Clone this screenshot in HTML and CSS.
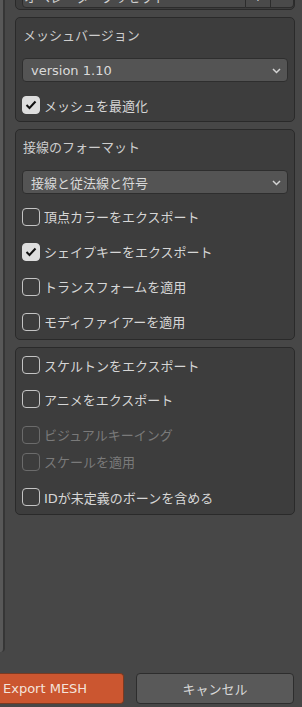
FILE: index.html
```html
<!DOCTYPE html>
<html lang="ja">
<head>
<meta charset="utf-8">
<title>Export MESH</title>
<link rel="stylesheet" href="styles.css">
</head>
<body>
<div class="window">
  <div class="top">
    <div class="edge"></div>
    <div class="panels">
      <section class="panel panel-preset">
        <div class="preset-row">
          <div class="preset-field"><span>オペレータープリセット</span><svg class="chev" width="8" height="5" viewBox="0 0 8 5"><polyline points="1,1 4,4 7,1" fill="none" stroke="#cfcfcf" stroke-width="1.4"/></svg></div>
          <div class="preset-btn">+</div>
          <div class="preset-btn last">−</div>
        </div>
      </section>

      <section class="panel">
        <div class="title">メッシュバージョン</div>
        <div class="select"><span>version 1.10</span><svg class="chev" width="9" height="6" viewBox="0 0 9 6"><polyline points="1,1 4.5,4.5 8,1" fill="none" stroke="#d4d4d4" stroke-width="1.5"/></svg></div>
        <label class="check-row first-check"><span class="box checked"><svg width="12" height="10" viewBox="0 0 12 10"><polyline points="1.5,5 4.5,8 10.5,1.5" fill="none" stroke="#111" stroke-width="2"/></svg></span><span class="lbl">メッシュを最適化</span></label>
      </section>

      <section class="panel">
        <div class="title">接線のフォーマット</div>
        <div class="select"><span>接線と従法線と符号</span><svg class="chev" width="9" height="6" viewBox="0 0 9 6"><polyline points="1,1 4.5,4.5 8,1" fill="none" stroke="#d4d4d4" stroke-width="1.5"/></svg></div>
        <div class="checks">
          <label class="check-row"><span class="box"></span><span class="lbl">頂点カラーをエクスポート</span></label>
          <label class="check-row"><span class="box checked"><svg width="12" height="10" viewBox="0 0 12 10"><polyline points="1.5,5 4.5,8 10.5,1.5" fill="none" stroke="#111" stroke-width="2"/></svg></span><span class="lbl">シェイプキーをエクスポート</span></label>
          <label class="check-row"><span class="box"></span><span class="lbl">トランスフォームを適用</span></label>
          <label class="check-row"><span class="box"></span><span class="lbl">モディファイアーを適用</span></label>
        </div>
      </section>

      <section class="panel panel-anim">
        <label class="check-row"><span class="box"></span><span class="lbl">スケルトンをエクスポート</span></label>
        <label class="check-row"><span class="box"></span><span class="lbl">アニメをエクスポート</span></label>
        <div class="subgroup">
          <label class="check-row small disabled"><span class="box"></span><span class="lbl">ビジュアルキーイング</span></label>
          <label class="check-row small disabled"><span class="box"></span><span class="lbl">スケールを適用</span></label>
        </div>
        <label class="check-row"><span class="box"></span><span class="lbl">IDが未定義のボーンを含める</span></label>
      </section>
    </div>
  </div>
  <div class="footer">
    <button class="btn btn-export">Export MESH</button>
    <button class="btn btn-cancel">キャンセル</button>
  </div>
</div>
</body>
</html>
```

FILE: styles.css
```css
* { box-sizing: border-box; }
html, body {
  margin: 0;
  padding: 0;
  background: #474747;
  overflow: hidden;
}
body {
  font-family: "DejaVu Sans", "Noto Sans CJK JP", sans-serif;
  font-size: 13px;
  color: #d6d6d6;
}
.window {
  width: 302px;
  height: 707px;
  display: flex;
  flex-direction: column;
}
.top {
  display: flex;
  height: 652px;
}
.edge {
  width: 5px;
  flex: none;
  background: #585858;
  border-right: 2px solid #363636;
  border-bottom-right-radius: 4px;
}
.panels {
  margin-left: 10px;
  width: 280px;
  display: flex;
  flex-direction: column;
  gap: 7px;
}
.panel {
  background: #3d3d3d;
  border: 1px solid #2a2a2a;
  border-radius: 5px;
  padding: 6px 6px 4px 6px;
}
.panel-preset {
  margin-top: -17px;
  padding: 0 0 1px 6px;
  border-top-left-radius: 0;
  border-top-right-radius: 0;
}
.preset-row {
  display: flex;
  height: 24px;
}
.preset-field {
  flex: 1;
  display: flex;
  align-items: center;
  justify-content: space-between;
  padding: 0 5px 0 1px;
  background: #4a4a4a;
  border: 1px solid #2c2c2c;
  border-radius: 0 0 0 4px;
  color: #cfcfcf;
}
.preset-btn {
  width: 25px;
  display: flex;
  align-items: center;
  justify-content: center;
  background: #4a4a4a;
  border: 1px solid #2c2c2c;
  border-left: none;
  color: #cfcfcf;
}
.preset-btn.last {
  width: 23px;
  border-radius: 0 0 4px 0;
}
.title {
  height: 20px;
  display: flex;
  align-items: center;
  padding-left: 1px;
  color: #cdcdcd;
}
.select {
  margin-top: 14px;
  height: 24px;
  display: flex;
  align-items: center;
  justify-content: space-between;
  padding: 0 6px 0 8px;
  background: #545454;
  border: 1px solid #2e2e2e;
  border-radius: 4px;
  color: #dadada;
}
.select .chev { margin-top: 1px; }
.check-row {
  display: flex;
  align-items: center;
  gap: 4px;
  height: 34px;
}
.first-check {
  margin-top: 11px;
  height: 24px;
}
.panel + .panel .checks { margin-top: 5px; }
.checks .check-row { height: 35px; }
.panel:nth-child(3) { padding-bottom: 0; }
.panel-anim { padding-top: 0; padding-bottom: 0; }
.subgroup {
  margin: 5px 0;
}
.check-row.small { height: 27px; }
.box {
  width: 18px;
  height: 18px;
  flex: none;
  border: 1.5px solid #c4c4c4;
  border-radius: 4px;
  display: flex;
  align-items: center;
  justify-content: center;
}
.box.checked {
  background: #dedede;
  border-color: #dedede;
}
.lbl { color: #d6d6d6; }
.disabled .box { border-color: #6b6b6b; }
.disabled .lbl { color: #7a7a7a; }
.footer {
  margin-top: 21px;
  display: flex;
  gap: 12px;
  height: 31px;
  padding-right: 8px;
}
.btn {
  font-family: inherit;
  font-size: 13px;
  height: 31px;
  border-radius: 4px;
  cursor: default;
}
.btn-export {
  width: 124px;
  background: #cb5630;
  border: 1px solid #7a3a22;
  border-left: none;
  border-radius: 0 4px 4px 0;
  color: #f4e3db;
  text-align: left;
  padding: 0 0 0 3px;
}
.btn-cancel {
  flex: 1;
  background: #595959;
  border: 1px solid #2d2d2d;
  color: #d8d8d8;
}
```
